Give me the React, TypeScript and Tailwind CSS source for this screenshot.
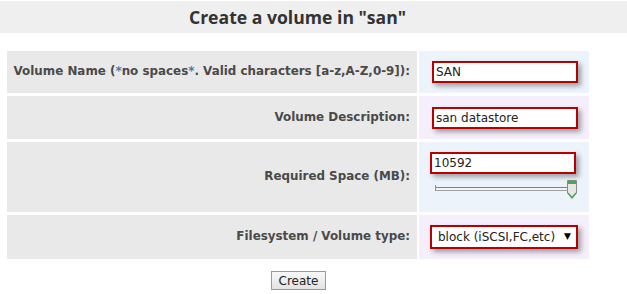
import React from 'react';

const labelCls =
  'flex items-center justify-end pr-[7px] bg-[#e9e9e9] text-[11.9px] font-bold text-[#4a4a4a]';

const fieldCls =
  'h-[22px] w-[146px] border-2 border-[#b80000] bg-white shadow-[3px_3px_5px_rgba(0,0,0,0.35)] flex items-center px-[2px] text-[12px] text-[#222]';

const Slider: React.FC = () => (
  <div className="relative mt-[5px] h-[21px] w-[146px]">
    <div className="absolute left-[5px] top-[8px] h-[4px] w-[136px] border border-[#a0a0a0] border-t-[#808080] bg-[#f4f4f4]" />
    <div className="absolute left-[5px] top-[6px] h-[6px] w-px bg-[#909090]" />
    <svg
      className="absolute left-[136px] top-0"
      width="12"
      height="21"
      viewBox="0 0 12 21"
    >
      <path
        d="M1.5 1.5 H10.5 V14 L6 19.5 L1.5 14 Z"
        fill="#e6e6e6"
        stroke="#8a8a8a"
        strokeWidth="1"
      />
      <rect x="2" y="2" width="8" height="3" fill="#3fae49" />
      <path d="M2 14 L6 18.5 L10 14" fill="none" stroke="#3fae49" strokeWidth="1.2" />
    </svg>
  </div>
);

export default function App() {
  return (
    <div className="w-[627px] h-[294px] bg-white" style={{ fontFamily: '"DejaVu Sans", Verdana, sans-serif' }}>
      <div className="mt-px flex h-[32px] items-center justify-center bg-[#efefef] pr-[32px]">
        <h1
          className="text-[17.6px] font-bold text-[#333]"
          style={{ fontFamily: '"Open Sans", "Liberation Sans", sans-serif' }}
        >
          Create a volume in "san"
        </h1>
      </div>

      <div className="ml-[7px] mt-[18px] grid grid-cols-[410px_170px] gap-x-[2px] gap-y-[3px]">
        <div className={`${labelCls} h-[42px]`}>
          <span>
            Volume Name (<span className="text-[#4a78b0]">*</span>no spaces
            <span className="text-[#4a78b0]">*</span>. Valid characters [a-z,A-Z,0-9]):
          </span>
        </div>
        <div className="flex h-[42px] items-center bg-[#edf3fb] pl-[13px]">
          <div className={fieldCls}>SAN</div>
        </div>

        <div className={`${labelCls} h-[43px]`}>Volume Description:</div>
        <div className="flex h-[43px] items-center bg-[#f5effc] pl-[13px]">
          <div className={`${fieldCls} mt-[1px]`}>san datastore</div>
        </div>

        <div className={`${labelCls} h-[70px]`}>Required Space (MB):</div>
        <div className="flex h-[70px] flex-col bg-[#edf3fb] pl-[11px] pt-[10px]">
          <div className={fieldCls}>10592</div>
          <Slider />
        </div>

        <div className={`${labelCls} h-[44px]`}>Filesystem / Volume type:</div>
        <div className="flex h-[44px] items-center bg-[#f5effc] pl-[11px]">
          <div className={`${fieldCls} h-[24px] w-[148px] justify-between pl-[6px] pr-[5px]`}>
            <span>block (iSCSI,FC,etc)</span>
            <span className="text-[9px] text-black">▼</span>
          </div>
        </div>
      </div>

      <div className="mt-[12px] flex justify-center pr-[30px]">
        <button className="h-[19px] w-[55px] border border-[#9a9a9a] bg-gradient-to-b from-[#f8f8f8] to-[#e3e3e3] text-[12px] leading-none text-[#222]">
          Create
        </button>
      </div>
    </div>
  );
}
